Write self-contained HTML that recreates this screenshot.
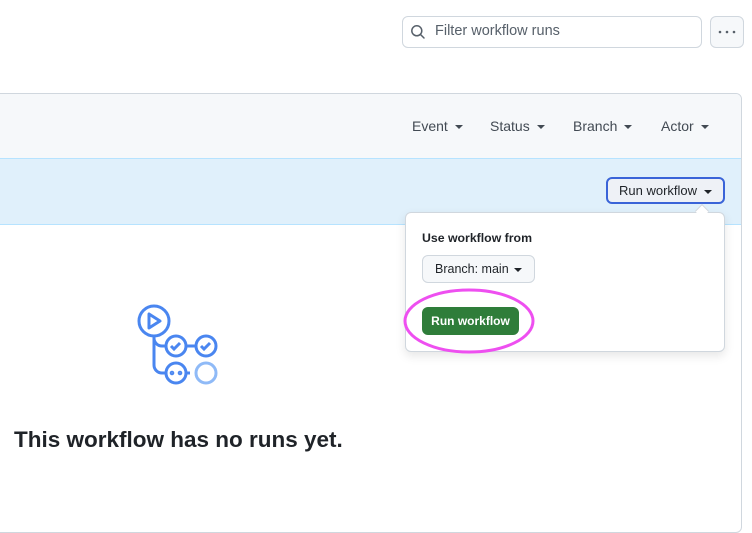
<!DOCTYPE html>
<html><head><style>
*{box-sizing:border-box;margin:0;padding:0}
body{width:752px;height:519px;background:#fff;font-family:"Liberation Sans",sans-serif;position:relative;overflow:hidden;color:#1f2328}
.abs{position:absolute}
.caret{display:inline-block;width:0;height:0;border-left:4px solid transparent;border-right:4px solid transparent;border-top:4px solid currentColor;vertical-align:middle;margin-left:7px}
</style></head><body>
<div class="abs" style="left:402px;top:16px;width:300px;height:32px;border:1px solid #d0d7de;border-radius:6px"></div>
<svg class="abs" style="left:410px;top:24px" width="16" height="16" viewBox="0 0 16 16"><circle cx="6.8" cy="6.8" r="5" fill="none" stroke="#57606a" stroke-width="1.5"/><path d="M10.5 10.5L14 14" stroke="#57606a" stroke-width="1.5" stroke-linecap="round"/></svg>
<div class="abs" style="left:435px;top:23px;font-size:14.5px;color:#57606a">Filter workflow runs</div>
<div class="abs" style="left:710px;top:16px;width:34px;height:32px;border:1px solid #d0d7de;border-radius:6px;background:#f6f8fa"></div>
<svg class="abs" style="left:717px;top:30px" width="20" height="4"><circle cx="3" cy="2" r="1.3" fill="#57606a"/><circle cx="10" cy="2" r="1.3" fill="#57606a"/><circle cx="17" cy="2" r="1.3" fill="#57606a"/></svg>

<div class="abs" style="left:-8px;top:93px;width:750px;height:440px;border:1px solid #d0d7de;border-radius:6px;overflow:hidden">
 <div style="height:65px;background:#f6f8fa;border-bottom:1px solid #b6e3ff"></div>
 <div style="height:66px;background:#e0f0fb;border-bottom:1px solid #b6e3ff"></div>
</div>
<div class="abs" style="top:118px;left:412px;font-size:14px;color:#424a53">Event<span class="caret"></span></div>
<div class="abs" style="top:118px;left:490px;font-size:14px;color:#424a53">Status<span class="caret"></span></div>
<div class="abs" style="top:118px;left:573px;font-size:14px;color:#424a53">Branch<span class="caret"></span></div>
<div class="abs" style="top:118px;left:661px;font-size:14px;color:#424a53">Actor<span class="caret"></span></div>

<div class="abs" style="left:606px;top:177px;width:119px;height:27px;border:2px solid #3a64d8;border-radius:6px;background:#eef1f6;font-size:13px;line-height:23px;padding-left:11px">Run workflow<span class="caret" style="margin-left:7px"></span></div>

<div class="abs" style="left:405px;top:212px;width:320px;height:140px;background:#fff;border:1px solid #d0d7de;border-radius:6px;box-shadow:0 4px 10px rgba(0,0,0,.1)"></div>
<div class="abs" style="left:697px;top:206px;width:10px;height:10px;background:#fff;transform:rotate(45deg);border-left:1px solid #d0d7de;border-top:1px solid #d0d7de"></div>
<div class="abs" style="left:422px;top:231px;font-size:12.3px;font-weight:bold">Use workflow from</div>
<div class="abs" style="left:422px;top:255px;width:113px;height:28px;border:1px solid #d0d7de;border-radius:6px;background:#f6f8fa;font-size:12.5px;line-height:26px;padding-left:12px">Branch: main<span class="caret" style="margin-left:5px"></span></div>
<div class="abs" style="left:422px;top:307px;width:97px;height:28px;border-radius:6px;background:#2f7d3a;color:#fff;font-size:12px;font-weight:bold;line-height:28px;text-align:center">Run workflow</div>
<svg class="abs" style="left:400px;top:285px" width="140" height="72"><ellipse cx="69" cy="36" rx="64" ry="31" fill="none" stroke="#ee4ff0" stroke-width="3"/></svg>

<svg class="abs" style="left:130px;top:300px" width="95" height="90" viewBox="0 0 95 90" fill="none" stroke-width="3">
<g stroke="#4a86f0">
<circle cx="24" cy="21" r="15"/>
<path d="M19 14v14l11-7z" stroke-linejoin="round"/>
<path d="M24 36v29a8 8 0 0 0 8 8h4M24 38a8 8 0 0 0 8 8h4"/>
<circle cx="46" cy="46" r="10"/><circle cx="76" cy="46" r="10"/><path d="M56 46h10"/>
<path d="M41 46l3 3 6-6M71 46l3 3 6-6"/>
<circle cx="46" cy="73" r="10"/><path d="M56 73h4"/>
<circle cx="42" cy="73" r="0.8" fill="#4a86f0"/><circle cx="50" cy="73" r="0.8" fill="#4a86f0"/>
</g>
<circle cx="76" cy="73" r="10" stroke="#8fbaf7"/>
</svg>

<div class="abs" style="left:14px;top:427px;font-size:22.5px;font-weight:bold">This workflow has no runs yet.</div>
</body></html>
